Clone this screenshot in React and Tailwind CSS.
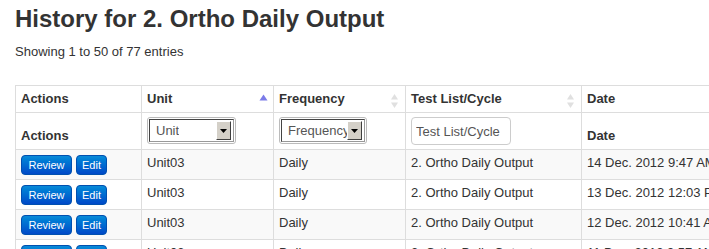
import React from 'react';

const rows = [
  { unit: 'Unit03', freq: 'Daily', list: '2. Ortho Daily Output', date: '14 Dec. 2012 9:47 AM' },
  { unit: 'Unit03', freq: 'Daily', list: '2. Ortho Daily Output', date: '13 Dec. 2012 12:03 PM' },
  { unit: 'Unit03', freq: 'Daily', list: '2. Ortho Daily Output', date: '12 Dec. 2012 10:41 AM' },
  { unit: 'Unit03', freq: 'Daily', list: '2. Ortho Daily Output', date: '11 Dec. 2012 9:57 AM' },
];

const SortBoth = () => (
  <svg width="9" height="16" viewBox="0 0 9 16" className="absolute right-[6px] top-[7px]">
    <path d="M4.5 1 L8 6.5 L1 6.5 Z" fill="#e0e0e0" />
    <path d="M4.5 15 L8 9.5 L1 9.5 Z" fill="#e0e0e0" />
  </svg>
);

const SortAsc = () => (
  <svg width="9" height="7" viewBox="0 0 9 7" className="absolute right-[5px] top-[8px]">
    <path d="M4.5 0.5 L8.5 6.5 L0.5 6.5 Z" fill="#7b7be8" />
  </svg>
);

const FakeSelect = ({ label, width }) => (
  <div className={`${width} h-[27px] rounded-[3px] border border-[#bbb] p-[1px]`}>
    <div className="flex h-full items-center justify-between border border-t-[#444] border-l-[#444] border-r-[#999] border-b-[#999] bg-white pl-[6px] pr-[2px]">
      <span className="overflow-hidden whitespace-nowrap text-[13px] font-normal text-[#555]">{label}</span>
      <div className="flex h-[19px] w-[15px] shrink-0 items-center justify-center border border-t-white border-l-white border-r-[#404040] border-b-[#404040] bg-[#d4d0c8]">
        <svg width="7" height="4" viewBox="0 0 7 4">
          <path d="M0 0 L7 0 L3.5 4 Z" fill="#000" />
        </svg>
      </div>
    </div>
  </div>
);

const App = () => {
  const th = 'border border-[#ddd] px-[5px] py-[4px] text-left font-bold leading-[18px] align-top relative';
  const td = 'border border-[#ddd] px-[5px] py-[4px] leading-[18px] align-top whitespace-nowrap';

  return (
    <div className="w-[709px] h-[249px] overflow-hidden bg-white text-[13px] text-[#333]" style={{ fontFamily: '"Liberation Sans", Arial, sans-serif' }}>
      <div className="px-[15px]">
        <h1 className="mt-[4px] text-[24px] font-bold leading-[30px]">History for 2. Ortho Daily Output</h1>
        <p className="mt-[9px] leading-[18px]">Showing 1 to 50 of 77 entries</p>

        <table className="mt-[24px] w-[900px] table-fixed border-collapse">
          <colgroup>
            <col className="w-[126px]" />
            <col className="w-[132px]" />
            <col className="w-[132px]" />
            <col className="w-[176px]" />
            <col className="w-[334px]" />
          </colgroup>
          <thead>
            <tr className="h-[27px]">
              <th className={th}>Actions</th>
              <th className={th}>Unit<SortAsc /></th>
              <th className={th}>Frequency<SortBoth /></th>
              <th className={th}>Test List/Cycle<SortBoth /></th>
              <th className={th}>Date</th>
            </tr>
            <tr className="h-[37px]">
              <th className={`${th} !align-bottom`}>Actions</th>
              <th className={th}>
                <FakeSelect label="Unit" width="w-[89px]" />
              </th>
              <th className={th}>
                <FakeSelect label="Frequency" width="w-[88px]" />
              </th>
              <th className={th}>
                <input
                  readOnly
                  placeholder="Test List/Cycle"
                  className="h-[28px] w-[100px] rounded-[4px] border border-[#ccc] px-[4px] text-[13px] font-normal text-[#555] placeholder:text-[#555] outline-none"
                />
              </th>
              <th className={`${th} !align-bottom`}>Date</th>
            </tr>
          </thead>
          <tbody>
            {rows.map((r, i) => (
              <tr key={i} className={`h-[30px] ${i % 2 === 0 ? 'bg-[#f9f9f9]' : 'bg-white'}`}>
                <td className={`${td} !pt-[5px] !pb-[4px]`}>
                  <div className="flex gap-[4px]">
                    <button className="h-[20px] w-[51px] rounded-[4px] border border-[#0050b0] bg-gradient-to-b from-[#0a8ad8] to-[#0048c8] text-[11px] leading-[18px] text-white">Review</button>
                    <button className="h-[20px] w-[31px] rounded-[4px] border border-[#0050b0] bg-gradient-to-b from-[#0a8ad8] to-[#0048c8] text-[11px] leading-[18px] text-white">Edit</button>
                  </div>
                </td>
                <td className={td}>{r.unit}</td>
                <td className={td}>{r.freq}</td>
                <td className={td}>{r.list}</td>
                <td className={td}>{r.date}</td>
              </tr>
            ))}
          </tbody>
        </table>
      </div>
    </div>
  );
};

export default App;
